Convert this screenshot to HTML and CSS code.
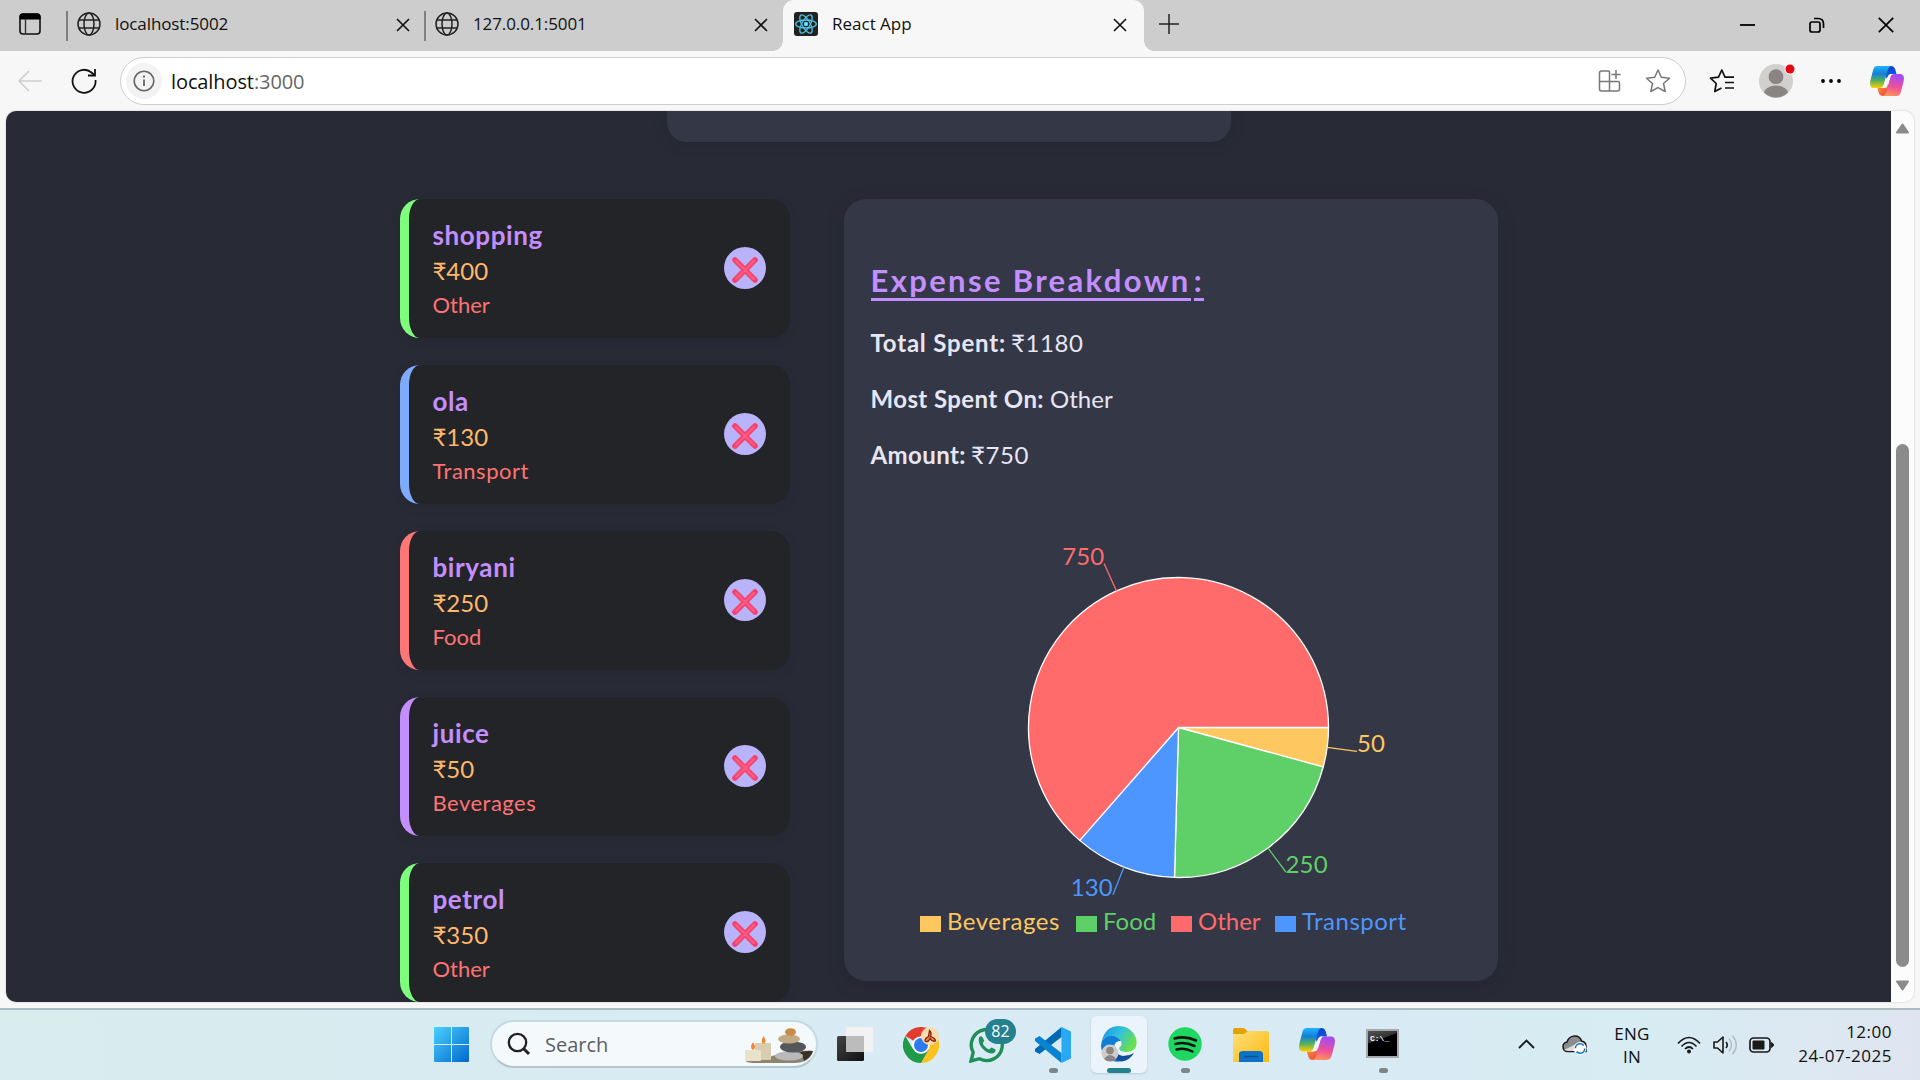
FILE: index.html
```html
<!DOCTYPE html>
<html lang="en">
<head>
<meta charset="utf-8">
<title>React App</title>
<link rel="stylesheet" href="styles.css">
</head>
<body>
<svg class="defs" width="0" height="0">
  <defs>
    <linearGradient id="cpA" x1="0" y1="0" x2="0" y2="1"><stop offset="0" stop-color="#1fb4ff"/><stop offset=".35" stop-color="#1580d8"/><stop offset=".65" stop-color="#4fae62"/><stop offset="1" stop-color="#ffd000"/></linearGradient>
    <linearGradient id="cpB" x1="0" y1="0" x2="0" y2="1"><stop offset="0" stop-color="#0d3fd0"/><stop offset="1" stop-color="#1a63e0"/></linearGradient>
    <linearGradient id="cpC" x1="0.2" y1="0" x2="0" y2="1"><stop offset="0" stop-color="#a44cf0"/><stop offset=".5" stop-color="#ee4f9a"/><stop offset="1" stop-color="#ffa050"/></linearGradient>
    <linearGradient id="cpD" x1="0" y1="0" x2="1" y2="1"><stop offset="0" stop-color="#ffa02c"/><stop offset="1" stop-color="#e8384a"/></linearGradient>
    <linearGradient id="win" x1="0" y1="0" x2="1" y2="1"><stop offset="0" stop-color="#4cd0ff"/><stop offset="1" stop-color="#0067cc"/></linearGradient>
    <symbol id="copilot" viewBox="0 0 34 30">
      <path d="M15 0H21C24.500 0 25.500 3 26.500 8H22C19 8 18 9.500 17 13L14 8Z" fill="url(#cpB)"/>
      <path d="M19 30H13C9.500 30 8.500 27 7.500 22H12C15 22 16 20.500 17 17L20 22Z" fill="url(#cpD)"/>
      <path d="M8 0H21C18.500 1 18 3.500 17 7L14 17.500C13 21 12 22 9 22H4C0 22-.5 18.500.5 14L3 4.500C4 1 5 0 8 0Z" fill="url(#cpA)"/>
      <path d="M26 30H13C15.500 29 16 26.500 17 23L20 12.500C21 9 22 8 25 8H30C34 8 34.500 11.500 33.500 16L31 25.500C30 29 29 30 26 30Z" fill="url(#cpC)"/>
      <path d="M18.500 9.500C19 8.500 20 8 21.500 8H22.500C20.800 9 20.300 10.500 19.600 13L17 21C16.500 21.700 15.500 22 14 22H11.500C13.300 21.300 14 19.500 14.800 17Z" fill="#f8f8fa"/>
    </symbol>
    <symbol id="globe" viewBox="0 0 24 24">
      <g fill="none" stroke="#222" stroke-width="1.5"><circle cx="12" cy="12" r="11"/><ellipse cx="12" cy="12" rx="5" ry="11"/><path d="M2 8H22M2 16H22"/></g>
    </symbol>
    <symbol id="close" viewBox="0 0 14 14"><path d="M1 1L13 13M13 1L1 13" fill="none" stroke="#111" stroke-width="1.6"/></symbol>
    <symbol id="cross-mark" viewBox="0 0 26 26"><path d="M3 3L23 23M23 3L3 23" fill="none" stroke="#f5426a" stroke-width="5.600" stroke-linecap="round"/><path d="M4 4L22 22M22 4L4 22" fill="none" stroke="#ff5a84" stroke-width="2.400" stroke-linecap="round"/></symbol>
  </defs>
</svg>

<header class="tabbar">
  <svg class="workspace" width="22" height="22" viewBox="0 0 22 22"><rect x="1" y="1" width="20" height="20" rx="3" fill="none" stroke="#111" stroke-width="1.600"/><path d="M1 6V3.500Q1 1 3.500 1H18.500Q21 1 21 3.500V6Z" fill="#000" stroke="#000"/><path d="M6.500 6V21" stroke="#333" stroke-width="1.400"/></svg>
  <div class="tab"><svg class="favicon"><use href="#globe"/></svg><span class="tab-title">localhost:5002</span><svg class="tab-close"><use href="#close"/></svg></div>
  <div class="tab"><svg class="favicon"><use href="#globe"/></svg><span class="tab-title">127.0.0.1:5001</span><svg class="tab-close"><use href="#close"/></svg></div>
  <div class="tab active"><svg class="favicon" viewBox="0 0 24 24"><rect width="24" height="24" rx="3" fill="#222"/><g fill="none" stroke="#50c0df" stroke-width="1.300"><ellipse cx="12" cy="12" rx="10.300" ry="4"/><ellipse cx="12" cy="12" rx="10.300" ry="4" transform="rotate(60 12 12)"/><ellipse cx="12" cy="12" rx="10.300" ry="4" transform="rotate(120 12 12)"/></g><circle cx="12" cy="12" r="2.200" fill="#61dafb"/></svg><span class="tab-title">React App</span><svg class="tab-close"><use href="#close"/></svg></div>
  <svg class="newtab" width="22" height="22" viewBox="0 0 22 22"><path d="M11 1V21M1 11H21" stroke="#222" stroke-width="1.500"/></svg>
  <div class="window-controls">
    <svg width="16" height="16" viewBox="0 0 16 16"><path d="M0 8H15" stroke="#000" stroke-width="1.800"/></svg>
    <svg width="16" height="16" viewBox="0 0 16 16"><g fill="none" stroke="#000" stroke-width="1.700"><rect x="1" y="5" width="10" height="10" rx="2"/><path d="M5 1.500H9Q14.500 1.500 14.500 7V11"/></g></svg>
    <svg width="16" height="16" viewBox="0 0 16 16"><path d="M.8.800L15.200 15.200M15.200.8L.8 15.200" stroke="#000" stroke-width="1.700"/></svg>
  </div>
</header>

<nav class="toolbar">
  <svg class="back" width="26" height="22" viewBox="0 0 26 22"><path d="M25 11H2M12 1L2 11L12 21" fill="none" stroke="#cfcfcf" stroke-width="1.700"/></svg>
  <svg class="refresh" width="26" height="26" viewBox="0 0 26 26"><path d="M24.500 12A11.500 11.500 0 1 1 20.500 4.500L23.500 7" fill="none" stroke="#111" stroke-width="1.800"/><path d="M24 1V7.500H17" fill="none" stroke="#111" stroke-width="1.800"/></svg>
  <div class="address">
    <span class="site-info"><svg width="22" height="22" viewBox="0 0 22 22"><circle cx="11" cy="11" r="9.800" fill="none" stroke="#666" stroke-width="1.600"/><path d="M11 9.500V16" stroke="#555" stroke-width="1.600"/><circle cx="11" cy="6.600" r="1.100" fill="#555"/></svg></span>
    <span class="url">localhost<span class="port">:3000</span></span>
    <svg class="apps" width="24" height="24" viewBox="0 0 24 24"><g fill="none" stroke="#777" stroke-width="1.500"><path d="M11.500 12.500V3Q11.500 2 10.500 2H3.500Q1.500 2 1.500 4V20Q1.500 22 3.500 22H19.500Q21.500 22 21.500 20V14Q21.500 12.500 20 12.500H1.500M11.500 12.500V22M18 1V10M13.500 5.500H22.500"/></g></svg>
    <svg class="star" width="26" height="26" viewBox="0 0 26 26"><path d="M13 2L16.300 9.200L24.500 10.200L18.500 15.500L20.200 23.500L13 19.600L5.800 23.500L7.500 15.500L1.500 10.200L9.700 9.200Z" fill="none" stroke="#777" stroke-width="1.500" stroke-linejoin="round"/></svg>
  </div>
  <svg class="favs" width="26" height="26" viewBox="0 0 26 26"><path d="M12.500 20L5.800 23.500L7.200 15.500L1.500 10.200L9.500 9.200L12.800 2L16 9.200H25M16 14.500H25M16 20H25" fill="none" stroke="#111" stroke-width="1.700" stroke-linejoin="round"/></svg>
  <svg class="avatar" width="38" height="38" viewBox="0 0 38 38"><clipPath id="av"><circle cx="17" cy="21" r="16.500"/></clipPath><circle cx="17" cy="21" r="17" fill="#d2d0ce"/><g clip-path="url(#av)" fill="#8a8582"><circle cx="17" cy="16.700" r="7.400"/><ellipse cx="17" cy="36" rx="13" ry="10.500"/></g><circle cx="31" cy="9" r="5.500" fill="#f7f7f7"/><circle cx="31" cy="9" r="4.500" fill="#e30613"/></svg>
  <svg class="more" width="22" height="6" viewBox="0 0 22 6"><circle cx="3" cy="3" r="1.900"/><circle cx="11" cy="3" r="1.900"/><circle cx="19" cy="3" r="1.900"/></svg>
  <svg class="copilot-tool" width="34" height="30"><use href="#copilot"/></svg>
</nav>

<div class="viewport">
  <main class="page">
    <div class="form-card"></div>
    <div class="columns">
      <section class="list">
        <article class="item green"><div><h3>shopping</h3><p class="amount">₹400</p><p class="cat">Other</p></div><button><svg width="26" height="26"><use href="#cross-mark"/></svg></button></article>
        <article class="item blue"><div><h3>ola</h3><p class="amount">₹130</p><p class="cat wide">Transport</p></div><button><svg width="26" height="26"><use href="#cross-mark"/></svg></button></article>
        <article class="item red"><div><h3>biryani</h3><p class="amount">₹250</p><p class="cat">Food</p></div><button><svg width="26" height="26"><use href="#cross-mark"/></svg></button></article>
        <article class="item purple"><div><h3>juice</h3><p class="amount">₹50</p><p class="cat wide">Beverages</p></div><button><svg width="26" height="26"><use href="#cross-mark"/></svg></button></article>
        <article class="item green"><div><h3>petrol</h3><p class="amount">₹350</p><p class="cat">Other</p></div><button><svg width="26" height="26"><use href="#cross-mark"/></svg></button></article>
      </section>
      <section class="breakdown">
        <h2><span>Expense Breakdown</span><span>:</span></h2>
        <p class="fact"><b class="total">Total Spent:</b> <span class="money">₹1180</span></p>
        <p class="fact"><b>Most Spent On:</b> Other</p>
        <p class="fact"><b>Amount:</b> <span class="money">₹750</span></p>
        <svg class="pie" width="600" height="374" viewBox="870 536 600 374">
          <g stroke="#fff" stroke-width="1.300" stroke-linejoin="round">
            <path d="M1178.500 727.500H1328.500A150 150 0 0 1 1323.220 766.960Z" fill="#ffc75f"/>
            <path d="M1178.500 727.500L1323.220 766.960A150 150 0 0 1 1174.500 877.450Z" fill="#5fd068"/>
            <path d="M1178.500 727.500L1174.500 877.450A150 150 0 0 1 1079.720 840.380Z" fill="#4d96ff"/>
            <path d="M1178.500 727.500L1079.720 840.380A150 150 0 1 1 1328.500 727.500Z" fill="#ff6b6b"/>
          </g>
          <g stroke-width="1.300">
            <path d="M1327.200 747.400L1356.900 751.400" stroke="#ffc75f"/>
            <path d="M1267.900 847.900L1285.900 872" stroke="#5fd068"/>
            <path d="M1123.900 867.200L1112.900 895.100" stroke="#4d96ff"/>
            <path d="M1116.500 590.900L1104.100 563.600" stroke="#ff6b6b"/>
          </g>
          <text x="1357" y="751.500" fill="#ffc75f">50</text>
          <text x="1285.500" y="872.500" fill="#5fd068">250</text>
          <text x="1113" y="895.500" fill="#4d96ff" text-anchor="end">130</text>
          <text x="1104.500" y="564.500" fill="#ff6b6b" text-anchor="end">750</text>
        </svg>
        <ul class="legend">
          <li class="l-bev"><i></i><span class="wide">Beverages</span></li>
          <li class="l-food"><i></i><span>Food</span></li>
          <li class="l-other"><i></i><span>Other</span></li>
          <li class="l-trans"><i></i><span class="wide">Transport</span></li>
        </ul>
      </section>
    </div>
  </main>
  <aside class="scrollbar">
    <svg width="15" height="11" viewBox="0 0 15 11"><path d="M7.500 1.500L13 9.500H2Z" fill="#8b8b8b" stroke="#8b8b8b" stroke-width="2" stroke-linejoin="round"/></svg>
    <div class="thumb"></div>
    <svg width="15" height="11" viewBox="0 0 15 11"><path d="M7.500 9.500L13 1.500H2Z" fill="#8b8b8b" stroke="#8b8b8b" stroke-width="2" stroke-linejoin="round"/></svg>
  </aside>
</div>

<footer class="taskbar">
  <svg class="start" width="35" height="35" viewBox="0 0 35 35"><path d="M1 0H17V17H0V1Q0 0 1 0ZM18 0H34Q35 0 35 1V17H18ZM0 18H17V35H1Q0 35 0 34ZM18 18H35V34Q35 35 34 35H18Z" fill="url(#win)"/></svg>
  <div class="search">
    <svg width="24" height="24" viewBox="0 0 24 24"><circle cx="10.500" cy="10.500" r="8.700" fill="none" stroke="#222" stroke-width="2.300"/><path d="M16.500 16.500L22 22" stroke="#222" stroke-width="3"/></svg>
    <span>Search</span>
    <svg class="spa" width="70" height="36" viewBox="0 0 70 36">
      <path d="M28 28Q48 22 69 23Q66 35 50 35H14Q2 35 2 33Q20 33 28 28Z" fill="#8d8570"/><path d="M52 26Q60 22 69 23Q67 29 60 33Q60 28 52 26Z" fill="#3a3128"/>
      <rect x="11" y="15" width="16" height="17" rx="1" fill="#d9cdaf"/><rect x="1" y="22" width="16" height="11" rx="1" fill="#e9e1ca"/>
      <path d="M9 14Q13 20 9 22Q5 20 9 14ZM19.500 8Q23.500 14 19.500 16Q16 14 19.500 8Z" fill="#f58634"/>
      <ellipse cx="45" cy="28" rx="14" ry="4.600" fill="#b9b9bb"/><ellipse cx="49" cy="19" rx="13" ry="5.500" fill="#55565a"/><ellipse cx="45" cy="11" rx="11" ry="4.500" fill="#c1ab84"/><ellipse cx="46.500" cy="4" rx="5.500" ry="3.800" fill="#c98c48"/>
    </svg>
  </div>
  <svg class="taskview" width="36" height="34" viewBox="0 0 36 34"><defs><linearGradient id="tvd" x1="0" y1="0" x2="1" y2="1"><stop offset="0" stop-color="#444"/><stop offset="1" stop-color="#111"/></linearGradient></defs><rect y="9" width="27" height="25" rx="1.500" fill="url(#tvd)"/><rect x="9" width="27" height="25" rx="1.500" fill="#f2f2f2"/><path d="M9 9H27V25H10.500Q9 25 9 23.500Z" fill="#bcbcbc"/></svg>
  <svg class="chrome" width="36" height="36" viewBox="0 0 36 36"><path d="M18 18L2.400 9A18 18 0 0 1 33.600 9H18Z" fill="#e33b2e"/><path d="M18 18L33.600 9A18 18 0 0 1 18 36L25.800 22.500Z" fill="#fcc31e"/><path d="M18 18L25.800 22.500L18 36A18 18 0 0 1 2.400 9L10.200 22.500Z" fill="#219a48"/><path d="M18 9H33.600L25 18Z" fill="#fcc31e"/><circle cx="18" cy="18" r="8.800" fill="#fff"/><circle cx="18" cy="18" r="7" fill="#2f7bea"/><circle cx="27" cy="9" r="9" fill="#f7dcb0"/><path d="M26.500 3.500Q29 6 27.500 9.500Q32.500 11 32.500 14Q29 15 27 11.500Q25 16 22 14Q22 11 25.500 9.500Z" fill="#e08a4a" stroke="#8c1d0c" stroke-width="1.300"/></svg>
  <div class="whatsapp"><svg width="36" height="36" viewBox="0 0 36 36"><path d="M2 34L4.200 25.500A15.500 15.500 0 1 1 10.500 31.700Z" fill="none" stroke="#1f8f57" stroke-width="3.400"/><path d="M10 10.500Q12.500 8 14 11L15.300 14Q13 16 14.500 18Q17 21.500 20 22.500L22.500 20.500L26.500 22.500Q27 26 23 26.500Q18 26.500 13.500 21.500Q8.500 16 10 10.500Z" fill="#1f8f57"/></svg><span class="badge">82</span></div>
  <svg class="vscode" width="36" height="36" viewBox="0 0 36 36"><path d="M26.500 0L36 4.500V31.500L26.500 36Z" fill="#29a9f4"/><path d="M26.500 0V10L4.500 27L0 24.500V22L26.500 0Z" fill="#0069b4"/><path d="M26.500 36V26L4.500 9L0 11.500V14L26.500 36Z" fill="#0a83d0"/></svg>
  <div class="edge-tile"><svg width="36" height="36" viewBox="0 0 36 36"><defs><linearGradient id="eg" x1="0" y1="0" x2="1" y2=".5"><stop offset="0" stop-color="#1c8fe0"/><stop offset=".5" stop-color="#2fc1e0"/><stop offset="1" stop-color="#6be04c"/></linearGradient></defs><path d="M1 14Q5 0 18 0Q30 0 35 12Q38 25 26 26Q18 26 18 22Q22 19 20 15Q16 9 9 10Q4 11 1 14Z" fill="url(#eg)"/><path d="M0 20Q0 12 8 10Q16 9 20 15Q14 14 13 21Q13 30 21 35Q15 37 9 34Q0 29 0 20Z" fill="#0f7fd6"/><path d="M13 20Q13 28 22 30Q28 30 33 27Q29 34 21 35.500Q10 34 11 25Z" fill="#114f9e"/><circle cx="9" cy="27" r="8.500" fill="#cfcdcb"/><circle cx="9" cy="24.500" r="3.800" fill="#8a8582"/><path d="M3 33Q9 25 15 33Q9 38 3 33Z" fill="#8a8582"/></svg></div>
  <svg class="spotify" width="34" height="34" viewBox="0 0 34 34"><circle cx="17" cy="17" r="16.700" fill="#1ed760"/><path d="M6.500 11.500Q17 8.500 28 13.500M7.500 17Q17 14.500 26.500 19M8.500 22.500Q17 20.500 24.500 24.500" fill="none" stroke="#111" stroke-width="2.500" stroke-linecap="round"/></svg>
  <svg class="explorer" width="36" height="34" viewBox="0 0 36 34"><defs><linearGradient id="fg" x1="0" y1="0" x2="1" y2="1"><stop offset="0" stop-color="#ffe07a"/><stop offset="1" stop-color="#fbb80e"/></linearGradient></defs><path d="M0 8V2Q0 0 2 0H11L15 3.500V8Z" fill="#e2a20a"/><path d="M0 6H11L15 3H34Q36 3 36 5V34H0Z" fill="url(#fg)"/><path d="M6 34V26Q6 23 10 23H26Q30 23 30 26V34Z" fill="#0e72c6"/><path d="M11 28.500H25" stroke="#0b4d93" stroke-width="1.500"/></svg>
  <svg class="copilot-task" width="36" height="34"><use href="#copilot"/></svg>
  <div class="terminal"><span>C:\_</span></div>
  <div class="indicators"><i></i><i class="on"></i><i></i><i></i></div>
  <div class="tray">
    <svg class="chev" width="17" height="10" viewBox="0 0 17 10"><path d="M1 9L8.500 1.500L16 9" fill="none" stroke="#1a1a1a" stroke-width="1.900"/></svg>
    <svg class="cloud" width="25" height="20" viewBox="0 0 25 20"><path d="M6 16.500Q1 16.500 1 11.500Q1 8 5 7Q7 1 13 1Q18 1 19.500 6Q24 7 24 11V16.500Z" fill="#8d8d8d" stroke="#1a1a1a" stroke-width="1.500"/><path d="M2 15L14 9L22 12V16H6Z" fill="#dcdcdc"/><circle cx="18" cy="13.500" r="6.400" fill="#fff"/><circle cx="18" cy="13.500" r="4.700" fill="none" stroke="#1673c8" stroke-width="1.600" stroke-dasharray="11 3.700"/></svg>
    <div class="lang"><span>ENG</span><span>IN</span></div>
    <svg class="wifi" width="24" height="18" viewBox="0 0 24 18"><g fill="none" stroke="#1a1a1a" stroke-width="1.700"><path d="M1 7.500Q12-4.500 23 7.500M4.500 10.500Q12 2.500 19.500 10.500M8 13Q12 9 16 13"/></g><circle cx="12" cy="15.500" r="2" fill="#1a1a1a"/></svg>
    <svg class="sound" width="25" height="20" viewBox="0 0 25 20"><path d="M1 7H4.500L10 2V18L4.500 13H1ZM13 7Q15.500 10 13 13" fill="none" stroke="#1a1a1a" stroke-width="1.600" stroke-linejoin="round"/><path d="M16 3.500Q21 10 16 16.500M19.500.8Q27 10 19.500 19.200" fill="none" stroke="#b3bec4" stroke-width="1.500"/></svg>
    <svg class="battery" width="25" height="16" viewBox="0 0 25 16"><rect x="1" y="1" width="20" height="14" rx="3.500" fill="none" stroke="#1a1a1a" stroke-width="1.700"/><rect x="3.500" y="3.500" width="12" height="9" rx="1" fill="#1a1a1a"/><path d="M22.300 5.500L24.300 7V9L22.300 10.500Z" fill="#1a1a1a" stroke="#1a1a1a"/></svg>
    <div class="clock"><span>12:00</span><span>24-07-2025</span></div>
  </div>
</footer>
</body>
</html>
```
FILE: styles.css
```css
* { box-sizing: border-box; }
body {
  margin: 0;
  width: 1920px;
  height: 1080px;
  overflow: hidden;
  display: flex;
  flex-direction: column;
  background: #f7f7f7;
  font-family: "Open Sans", "Noto Sans", sans-serif;
  color: #111;
}
svg { display: block; flex: none; }
.defs { position: absolute; }
h2, h3, p, ul { margin: 0; padding: 0; }

/* Tab strip */
.tabbar { height: 51px; flex: none; display: flex; background: #cdcdcd; }
.workspace { margin: 13px 25px 0 19px; }
.tab { width: 358px; display: flex; align-items: flex-start; position: relative; font-size: 17px; line-height: 24px; padding: 12px 14px 0 11px; letter-spacing: -.1px; }
.tab:not(.active)::before { content: ""; position: absolute; left: 0; top: 11px; width: 2px; height: 30px; background: #808080; }
.tab.active { width: 361px; margin-left: 1px; background: #f7f7f7; border-radius: 11px 11px 0 0; padding-right: 17px; letter-spacing: 0; }
.tab.active::before, .tab.active::after { content: ""; position: absolute; bottom: 0; width: 10px; height: 10px; }
.tab.active::before { left: -10px; background: radial-gradient(circle at 0 0, transparent 9.500px, #f7f7f7 10px); }
.tab.active::after { right: -10px; background: radial-gradient(circle at 100% 0, transparent 9.500px, #f7f7f7 10px); }
.favicon { width: 24px; height: 24px; }
.tab-title { margin-left: 14px; flex: 1; white-space: nowrap; }
.tab-close { width: 14px; height: 14px; margin-top: 6px; }
.newtab { margin: 13px 0 0 14px; }
.window-controls { display: flex; gap: 53px; margin: 17px 26px 0 auto; }

/* Toolbar */
.toolbar { height: 60px; flex: none; display: flex; align-items: center; background: #f7f7f7; }
.back { margin-left: 17px; }
.refresh { margin-left: 28px; }
.address { width: 1566px; height: 48px; margin-left: 23px; display: flex; align-items: center; background: #fff; border: 1.500px solid #cdcdcd; border-radius: 24px; padding: 0 14px 0 5px; }
.site-info { width: 36px; height: 36px; border-radius: 50%; background: #f3f3f3; display: flex; align-items: center; justify-content: center; }
.url { font-size: 20px; line-height: 30px; margin: 1px 0 0 9px; flex: 1; letter-spacing: -.1px; }
.port { color: #666; }
.star { margin-left: 23px; }
.favs { margin-left: 23px; }
.avatar { margin: -4px 0 0 24px; }
.more { margin-left: 23px; }
.copilot-tool { margin-left: 28px; }

/* Page */
.viewport { height: 891px; flex: none; margin: 0 6px; display: flex; border-radius: 10px; overflow: hidden; box-shadow: 0 0 2px #bbb; }
.page { width: 1885px; background: #282a36; font-family: Lato, "Noto Sans", sans-serif; overflow: hidden; }
.form-card { width: 564px; height: 31px; margin-left: 661px; background: #343746; border-radius: 0 0 20px 20px; box-shadow: 0 2px 16px rgba(0,0,0,.12); }
.columns { display: flex; gap: 54px; margin: 57px 0 0 394px; align-items: flex-start; }
.list { width: 390px; display: flex; flex-direction: column; gap: 27.300px; }
.item { height: 138.700px; display: flex; justify-content: space-between; align-items: center; background: #232428; border-left: 9px solid; border-radius: 20px; padding: 0 24px 0 23.500px; box-shadow: 0 3px 12px rgba(0,0,0,.08); }
.green { border-color: #7dff7d; }
.blue { border-color: #7dacff; }
.red { border-color: #ff7676; }
.purple { border-color: #c38fff; }
.item h3 { font-size: 26px; line-height: 36px; font-weight: 700; color: #c38fff; letter-spacing: .6px; }
.amount { font-size: 24px; line-height: 36px; color: #ffb86c; }
.cat { font-size: 22px; line-height: 31px; color: #ff7373; }
.wide { letter-spacing: .5px; }
.item button { width: 42px; height: 42px; border: 0; border-radius: 50%; background: #b8b3fa; padding: 3px 0 0; display: flex; align-items: center; justify-content: center; }

.breakdown { width: 654px; height: 782px; background: #343746; border-radius: 22px; padding: 60px 27px 0 26.500px; box-shadow: 0 4px 20px rgba(0,0,0,.12); color: #e6e6f5; }
.breakdown h2 { display: flex; gap: 3px; font-size: 31px; line-height: 43px; font-weight: 700; color: #c38fff; letter-spacing: 2.350px; }
.breakdown h2 span { border-bottom: 3px solid #c38fff; height: 42px; }
.fact { font-size: 24px; line-height: 56px; height: 56px; }
.fact b { letter-spacing: .4px; }
.fact .total { letter-spacing: .8px; }
.money { letter-spacing: .6px; margin-left: -1px; }
.breakdown h2 + .fact { margin-top: 14px; }
.pie { margin: 53px 0 0 -.5px; }
.pie text { font-size: 24px; letter-spacing: .2px; }
.legend { list-style: none; display: flex; margin: -4px 0 0 49.500px; font-size: 24px; line-height: 30px; }
.legend li { display: flex; align-items: center; gap: 6px; }
.legend i { width: 21px; height: 16px; margin-top: 6px; }
.l-bev { color: #ffc75f; width: 156px; } .l-bev i { background: #ffc75f; }
.l-food { color: #5fd068; width: 95px; } .l-food i { background: #5fd068; }
.l-other { color: #ff6b6b; width: 104px; } .l-other i { background: #ff6b6b; }
.l-trans { color: #4d96ff; } .l-trans i { background: #4d96ff; }

.scrollbar { width: 23px; background: #fcfcfc; display: flex; flex-direction: column; align-items: center; padding: 12px 0 11px; }
.thumb { width: 13px; height: 523px; margin-top: auto; margin-bottom: 13px; border-radius: 7px; background: #8b8b8b; }

/* Taskbar */
.taskbar { height: 72px; margin-top: 6px; flex: none; position: relative; display: flex; align-items: center; border-top: 2px solid #acbcc3; background: linear-gradient(90deg, #d9ecee 0, #d8ebf2 30%, #d9eaf5 60%, #d7ecf3 85%, #dfe5f0 100%); }
.start { margin-left: 434px; margin-top: -1px; }
.search { width: 328px; height: 48px; margin: -2px 0 0 21px; display: flex; align-items: center; background: #f4f9fc; border: 2px solid #c5d9e1; border-bottom-color: #b2c5cd; border-radius: 24px; padding: 0 1px 0 15px; font-size: 20px; color: #5b5f62; }
.search span { margin: 2px 0 0 14px; line-height: 30px; flex: 1; }
.spa { margin-right: 1px; margin-top: 4px; }
.taskview { margin-left: 19px; margin-top: -2px; }
.chrome { margin-left: 30px; margin-top: -1px; }
.whatsapp { margin-left: 30px; margin-top: -1px; position: relative; }
.badge { position: absolute; left: 16px; top: -8px; width: 31px; height: 25px; border-radius: 13px; background: #24818f; color: #fff; font-size: 16px; line-height: 24px; text-align: center; }
.vscode { margin-left: 30px; margin-top: -1px; }
.edge-tile { width: 56px; height: 57px; margin-left: 20px; margin-top: -2px; border-radius: 6px; background: #ecf4fb; display: flex; align-items: center; justify-content: center; box-shadow: 0 1px 2px #b9cdd6; }
.spotify { margin-left: 21px; margin-top: -2px; }
.explorer { margin-left: 31px; }
.copilot-task { margin-left: 30px; margin-top: -2px; }
.terminal { width: 33px; height: 29px; margin: -4px 0 0 31px; border: 2px solid #a5a8ad; background: linear-gradient(160deg, #555 0, #333 35%, #000 36%); color: #fff; font: bold 8px/9px "Liberation Mono", monospace; padding: 3px 0 0 2px; }
.indicators { position: absolute; left: 1049px; top: 58px; display: flex; align-items: center; }
.indicators i { width: 9px; height: 5px; border-radius: 3px; background: #7b868b; }
.indicators i.on { width: 24px; background: #24818f; margin: 0 50px 0 49px; }
.indicators i:last-child { margin-left: 189px; }
.tray { margin-left: auto; margin-right: 28px; display: flex; align-items: center; font-size: 17px; }
.chev { margin-right: 27px; margin-top: -2px; }
.cloud { margin-right: 27px; }
.lang { width: 36px; display: flex; flex-direction: column; align-items: center; line-height: 23px; margin-right: 27px; letter-spacing: .3px; }
.wifi { margin-right: 12px; margin-top: -1px; }
.sound { margin-right: 11px; margin-top: -1px; }
.battery { margin-top: -1px; }
.clock { width: 118px; display: flex; flex-direction: column; align-items: flex-end; line-height: 24px; margin-top: -2px; letter-spacing: .5px; }
```
